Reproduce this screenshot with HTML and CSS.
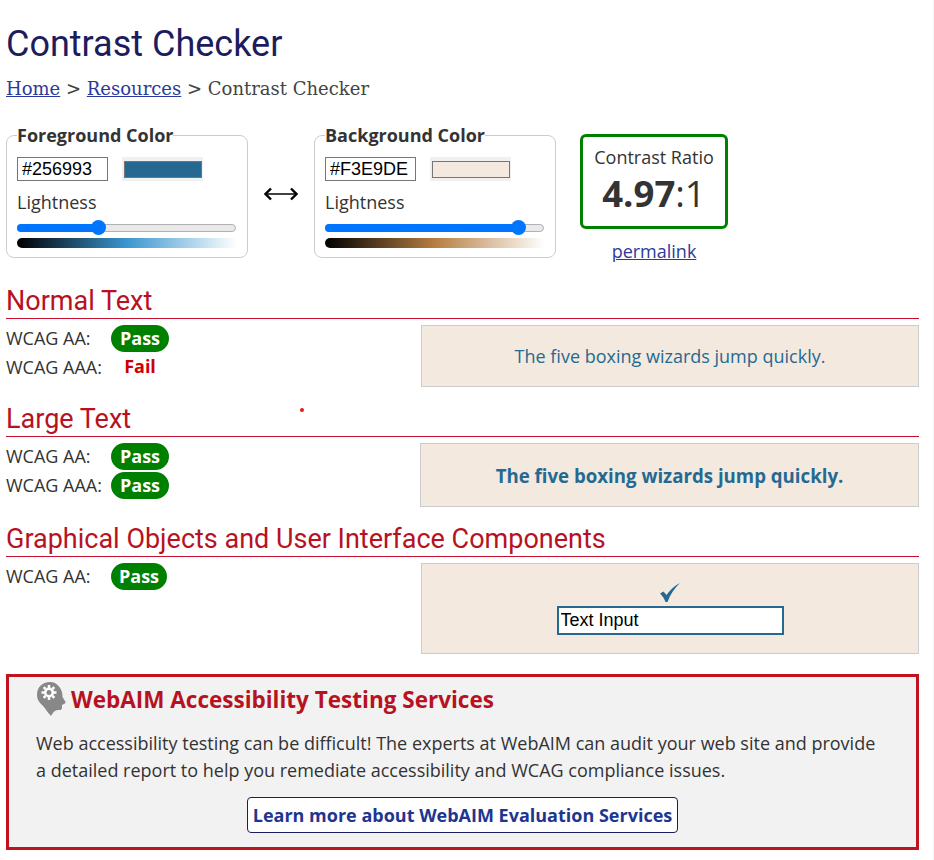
FILE: index.html
```html
<!DOCTYPE html>
<html lang="en">
<head>
<meta charset="UTF-8" />
<title>WebAIM: Contrast Checker</title>
<link rel="stylesheet" href="styles.css">
</head>
<body>
  <h1>Contrast Checker</h1>
  <p class="crumbs"><a href="#">Home</a> &gt; <a href="#">Resources</a> &gt; Contrast Checker</p>

  <div class="pickers">
    <fieldset class="picker">
      <legend>Foreground Color</legend>
      <div class="hexrow">
        <input class="hex" type="text" value="#256993" />
        <span class="swatchwrap"><span class="swatch fg"></span></span>
      </div>
      <div class="light">Lightness</div>
      <div class="slider"><span class="fill" style="width:38%"></span><span class="knob" style="left:33.5%"></span></div>
      <div class="ramp ramp-fg"></div>
    </fieldset>
    <div class="swap">
      <svg width="34" height="16" viewBox="0 0 34 16"><path d="M2 8h30" fill="none" stroke="#000" stroke-width="1.500"/><path d="M7 2.500 1.500 8 7 13.500M27 2.500 32.500 8 27 13.500" fill="none" stroke="#000" stroke-width="2.400"/></svg>
    </div>
    <fieldset class="picker">
      <legend>Background Color</legend>
      <div class="hexrow">
        <input class="hex" type="text" value="#F3E9DE" />
        <span class="swatchwrap"><span class="swatch bg"></span></span>
      </div>
      <div class="light">Lightness</div>
      <div class="slider"><span class="fill" style="width:88%"></span><span class="knob" style="left:85.3%"></span></div>
      <div class="ramp ramp-bg"></div>
    </fieldset>
    <div class="ratiocol">
      <div class="ratio">
        <div class="ratio-label">Contrast Ratio</div>
        <div class="ratio-num"><strong>4.97</strong>:1</div>
      </div>
      <a class="permalink" href="#">permalink</a>
    </div>
  </div>

  <h2>Normal Text</h2>
  <div class="result result-normal">
    <div class="levels">
      <div class="level"><span class="lname">WCAG AA:</span><span class="pass">Pass</span></div>
      <div class="level"><span class="lname">WCAG AAA:</span><span class="fail">Fail</span></div>
    </div>
    <div class="sample sample-normal">The five boxing wizards jump quickly.</div>
  </div>

  <h2>Large Text</h2>
  <span class="dot"></span>
  <div class="result result-large">
    <div class="levels">
      <div class="level"><span class="lname">WCAG AA:</span><span class="pass">Pass</span></div>
      <div class="level"><span class="lname">WCAG AAA:</span><span class="pass">Pass</span></div>
    </div>
    <div class="sample sample-large">The five boxing wizards jump quickly.</div>
  </div>

  <h2>Graphical Objects and User Interface Components</h2>
  <div class="result result-ui">
    <div class="levels">
      <div class="level"><span class="lname">WCAG AA:</span><span class="pass pass-ui">Pass</span></div>
    </div>
    <div class="sample sample-ui">
      <svg class="check" width="20" height="19" viewBox="0 0 20 19"><path d="M0 10.500 3.500 8.500 6.500 12C9.500 7.500 14 3 20 0 14.500 5 10.500 11 7.500 19H5.500C4.500 16 2.500 13 0 10.500z" fill="#256993"/></svg>
      <input class="textinput" type="text" value="Text Input" />
    </div>
  </div>

  <div class="promo">
    <h3>
      <svg class="head" width="29" height="34" viewBox="0 0 29 34">
        <path d="M13 0C5 0 0 5.500 0 13c0 5 3 8 6 11 2 2 4 6 8 10 2-4 4-6 7-6h2c1.500 0 2-1 2-2.500V23l2-1c1.500-.5 2-1.500 1-3l-2.500-4C26 8 21 0 13 0z" fill="#888"/>
        <circle cx="12" cy="10.500" r="3.750" fill="none" stroke="#fff" stroke-width="2.500"/>
        <path d="M12 3v3.500M12 14.500V18M4.500 10.500H8M16 10.500h3.500M6.700 5.200 8.500 7M15.500 14l1.800 1.800M17.300 5.200 15.500 7M8.500 14l-1.800 1.800" stroke="#fff" stroke-width="2.500"/>
      </svg>
      WebAIM Accessibility Testing Services
    </h3>
    <p>Web accessibility testing can be difficult! The experts at WebAIM can audit your web site and provide a detailed report to help you remediate accessibility and WCAG compliance issues.</p>
    <div class="promo-cta"><a class="btn" href="#">Learn more about WebAIM Evaluation Services</a></div>
  </div>
</body>
</html>
```

FILE: styles.css
```css
html { overflow: hidden; }
body { margin: 0; padding: 0 14px 0 6px; font-family: "Open Sans", sans-serif; font-size: 18px; color: #333; background: #fff; height: 860px; box-sizing: border-box; border-right: 1px solid #f6f6f6; }
a { color: #2a3a9a; }
h1 { margin: 0; padding-top: 23px; font-family: Roboto, sans-serif; font-weight: 400; font-size: 36px; line-height: 42px; color: #1c1c5e; }
.crumbs { margin: 12px 0 0; font-family: "DejaVu Serif", serif; font-size: 18px; line-height: 24px; color: #444; }

.pickers { display: flex; align-items: flex-start; margin-top: 22px; height: 163px; }
.picker { width: 220px; height: 123px; box-sizing: content-box; margin: 0; padding: 10px 10px 0; border: 1px solid #ccc; border-radius: 8px; }
.picker legend { padding: 0; font-weight: 700; font-size: 18px; line-height: 24px; }
.hexrow { display: flex; align-items: center; }
.hex { width: 91px; height: 24px; box-sizing: border-box; padding: 0 4px; border: 1px solid #767676; font-family: "Liberation Sans", sans-serif; font-size: 18px; color: #000; }
.swatchwrap { display: block; box-sizing: border-box; height: 24px; margin-left: 14px; padding: 4px 1px 3px 2px; background: #f0f0f0; }
.swatch { display: block; width: 76px; height: 15px; border: 1px solid #767676; }
.swatch.fg { background: #256993; }
.swatch.bg { background: #f3e9de; }
.light { margin-top: 9px; line-height: 24px; }
.slider { position: relative; box-sizing: border-box; height: 8px; width: 219px; margin-top: 10px; background: #e9e9e9; border: 1px solid #b2b2b2; border-radius: 5px; }
.fill { position: absolute; left: -1px; top: -1px; height: 8px; background: #0075ff; border-radius: 5px; }
.knob { position: absolute; top: -5px; width: 15px; height: 15px; background: #0075ff; border-radius: 50%; }
.ramp { width: 220px; height: 10px; margin-top: 6px; border-radius: 5px 0 0 5px; }
.ramp-fg { background: linear-gradient(to right, #000, #3b96cf 50%, #fff); }
.ramp-bg { background: linear-gradient(to right, #000, #b67e41 50%, #fff); }
.swap { width: 66px; text-align: center; padding-top: 60px; }
.ratiocol { margin-left: 24px; width: 148px; text-align: center; margin-top: 11px; }
.ratio { width: 148px; height: 95px; box-sizing: border-box; border: 3px solid #008000; border-radius: 6px; padding-top: 8px; }
.ratio-label { line-height: 24px; font-size: 18px; }
.ratio-num { font-size: 36.500px; line-height: 48px; }
.permalink { display: inline-block; margin-top: 10px; line-height: 24px; }

h2 { margin: 0; padding-bottom: 2px; font-family: Roboto, sans-serif; font-weight: 400; font-size: 27px; line-height: 30px; color: #b7121f; border-bottom: 1px solid #c8102e; }
.result { display: flex; justify-content: space-between; padding-top: 6px; }
.levels { margin-top: -1px; }
.level { display: flex; align-items: center; height: 29px; }
.lname { width: 105px; padding-bottom: 2px; }
.pass { display: block; width: 58px; line-height: 27px; text-align: center; color: #fff; font-weight: 700; background: #008000; border-radius: 14px; }
.pass-ui { width: 56px; }
.fail { display: block; width: 58px; padding-bottom: 3px; text-align: center; color: #c00; font-weight: 700; }
.sample { box-sizing: border-box; background: #f3e9de; border: 1px solid #ccc; color: #256993; text-align: center; }
.sample-normal { width: 498px; height: 62px; line-height: 60px; }
.sample-large { width: 499px; height: 64px; line-height: 64px; font-size: 18.660px; font-weight: 700; }
.sample-ui { width: 498px; height: 91px; padding-top: 19px; display: flex; flex-direction: column; align-items: center; }
.result-normal { height: 79px; }
.result-large { height: 81px; }
.result-ui { height: 111px; }
.dot { position: absolute; left: 300px; top: 408px; width: 4px; height: 4px; border-radius: 50%; background: #e01b24; }
.check { display: block; }
.textinput { width: 227px; height: 29px; box-sizing: border-box; margin-top: 4px; padding: 0 2px; border: 2px solid #256993; font-family: "Liberation Sans", sans-serif; font-size: 18px; color: #000; }

.promo { box-sizing: border-box; height: 176px; padding: 4px 27px 0; background: #f2f2f2; border: 3px solid #c1121f; }
.promo h3 { display: flex; align-items: center; gap: 5px; margin: 0; height: 36px; font-size: 22.500px; font-weight: 700; color: #b7121f; }
.head { margin-left: 1px; }
.promo p { margin: 13px 0 0; line-height: 27px; }
.promo-cta { text-align: center; margin-top: 13px; }
.btn { display: inline-block; padding: 0 5px; line-height: 34px; border: 1px solid #1c1c5e; border-radius: 4px; background: #fff; font-weight: 700; text-decoration: none; color: #20358f; }
```
